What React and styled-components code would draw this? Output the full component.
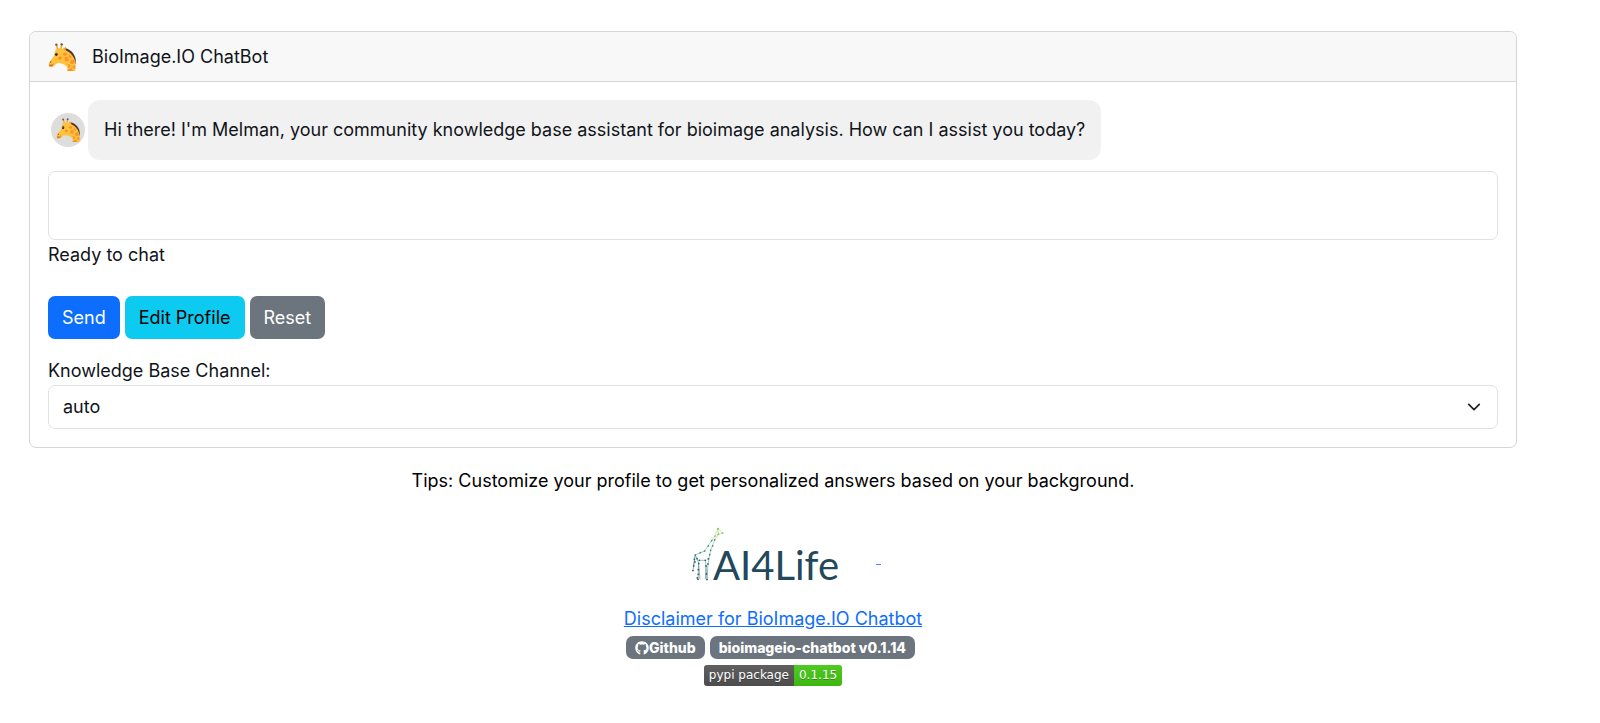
import React from "react";
import styled, { createGlobalStyle } from "styled-components";
import { FaGithub } from "react-icons/fa";

const GlobalStyle = createGlobalStyle`
  *, *::before, *::after { box-sizing: border-box; }
  body {
    margin: 0;
    background: #fff;
    color: #212529;
    font-family: Inter, "Liberation Sans", sans-serif;
    font-size: 18px;
    line-height: 28px;
  }
  button, textarea, select {
    font: inherit;
    color: inherit;
  }
`;

const Page = styled.main`
  padding: 31px 83px 24px 29px;
`;

const Card = styled.section`
  border: 1px solid #d4d5d6;
  border-radius: 7px;
  overflow: hidden;
  color: #10141a;
`;

const CardHeader = styled.header`
  display: flex;
  align-items: center;
  gap: 16px;
  height: 50px;
  padding: 0 18px;
  background: #f8f8f8;
  border-bottom: 1px solid #d4d5d6;
`;

const Title = styled.h1`
  margin: 0;
  font-size: 18px;
  font-weight: 400;
  line-height: 28px;
`;

const CardBody = styled.div`
  display: flex;
  flex-direction: column;
  padding: 18px;
`;

const Message = styled.div`
  display: flex;
  align-items: center;
  gap: 3px;
  padding-left: 3px;
`;

const Avatar = styled.div`
  display: flex;
  flex: none;
  align-items: center;
  justify-content: center;
  width: 34px;
  height: 34px;
  border-radius: 50%;
  background: #ddd;
`;

const Bubble = styled.p`
  margin: 0;
  padding: 16px;
  border-radius: 12px;
  background: #f1f1f1;
`;

const Input = styled.textarea`
  display: block;
  width: 100%;
  height: 69px;
  margin-top: 11px;
  padding: 7px 14px;
  border: 1px solid #dee2e6;
  border-radius: 7px;
  background: #fff;
  resize: none;
`;

const Status = styled.div`
  line-height: 30px;
`;

const Actions = styled.div`
  display: flex;
  gap: 5px;
  margin: 26px 0 18px;
`;

const tones = {
  primary: ["#0d6efd", "#fff"],
  info: ["#0dcaf0", "#000"],
  secondary: ["#6c757d", "#fff"],
};

const Button = styled.button`
  height: 43px;
  padding: 0 14px;
  border: 0;
  border-radius: 7px;
  background: ${({ $tone }) => tones[$tone][0]};
  color: ${({ $tone }) => tones[$tone][1]};
`;

const SelectWrap = styled.div`
  display: grid;
  align-items: center;

  > * { grid-area: 1 / 1; }
  svg {
    justify-self: end;
    margin-right: 17px;
    pointer-events: none;
  }
`;

const Select = styled.select`
  appearance: none;
  width: 100%;
  height: 44px;
  padding: 0 14px;
  border: 1px solid #dee2e6;
  border-radius: 7px;
  background: #fff;
`;

const Footer = styled.footer`
  display: flex;
  flex-direction: column;
  align-items: center;
  padding-top: 19px;
  color: #000;
`;

const Tips = styled.p`
  margin: 0 0 32px;
`;

const Logos = styled.div`
  display: flex;
  gap: 32px;
  margin: 0 0 14px 26px;
`;

const EmptyLink = styled.a`
  width: 5px;
  height: 38px;
  border-bottom: 1px solid #4a86fd;
`;

const LogoLink = styled.a`
  display: block;
  svg { display: block; }
`;

const Disclaimer = styled.a`
  color: #0d6efd;
`;

const Badges = styled.div`
  display: flex;
  gap: 5px;
  margin: 3px 5px 6px 0;
`;

const Badge = styled.a`
  display: flex;
  align-items: center;
  height: 23px;
  padding: 0 9px;
  border-radius: 7px;
  background: #6c757d;
  color: #fff;
  font-size: 14px;
  font-weight: 800;
  text-decoration: none;
`;

const Pypi = styled.a`
  display: flex;
  height: 21px;
  border-radius: 3px;
  overflow: hidden;
  color: #fff;
  font: 12px/21px "DejaVu Sans", sans-serif;
  text-decoration: none;
  text-shadow: 0 1px 0 rgba(1, 1, 1, 0.3);
`;

const PypiPart = styled.span`
  padding: 0 5px;
  background: linear-gradient(rgba(187, 187, 187, 0.1), rgba(0, 0, 0, 0.1))
    ${({ $color }) => $color};
`;

function Giraffe({ size }) {
  return (
    <svg width={size} height={size} viewBox="0 0 82 84" aria-hidden="true">
      <path d="M46 14C64 16 80 31 82 49V65L73 43L53 24Z" fill="#543930" />
      <path d="M25 6L28 20M40 6L37 20" stroke="#f0ad3a" strokeWidth="5" />
      <circle cx="24" cy="5" r="3.5" fill="#7b5544" />
      <circle cx="40" cy="4" r="3.5" fill="#7b5544" />
      <path d="M43 18L53 11Q55 20 45 25Z" fill="#f4a42a" />
      <path d="M22 20C29 14 42 15 49 21C68 27 78 43 81 58V84H56C59 78 58 73 53 68C45 63 38 60 30 60C22 61 17 71 8 72C0 72 0 63 4 56L17 39C19 31 19 24 22 20Z" fill="#ffc23c" />
      <path d="M3 61C0 69 2 72 8 72C13 71 17 68 20 65C14 67 8 66 3 61Z" fill="#f2a02c" />
      <g fill="#f7952a">
        <path d="M49 28L57 31L54 38L48 38L43 33Z" />
        <path d="M35 40L41 43L39 49L32 50L28 45Z" />
        <path d="M49 43L57 41L62 49L57 56L49 53Z" />
        <path d="M61 33L69 40L69 46L62 42Z" />
        <path d="M68 51L77 50L79 60L71 64L65 59Z" />
        <path d="M58 62L65 66L66 73L60 74Z" />
        <path d="M72 69L81 66V78L74 76Z" />
        <path d="M59 79L69 76L76 84H57Z" />
      </g>
      <ellipse cx="24" cy="34" rx="4" ry="5" fill="#302622" />
      <circle cx="23" cy="32" r="1.3" fill="#fff" />
      <ellipse cx="7" cy="57" rx="2" ry="2.5" fill="#66483e" />
      <path d="M4 67Q10 69 15 63" fill="none" stroke="#895020" strokeWidth="2" />
    </svg>
  );
}

const joints = [
  [78, 2], [92, 15], [79, 19], [69, 24], [59, 38], [49, 54], [38, 69], [25, 74],
  [10, 81], [7, 94], [5, 114], [3, 128], [15, 92], [20, 106], [19, 125], [19, 139],
  [18, 154], [22, 97], [40, 97], [42, 114], [43, 138], [45, 155], [48, 108],
  [49, 93], [53, 80], [56, 67], [62, 54], [68, 36], [9, 102], [16, 150],
];

function AI4LifeLogo() {
  return (
    <svg width="152" height="64" viewBox="0 0 152 64" role="img" aria-label="AI4Life">
      <defs>
        <linearGradient id="hide" x1="0" y1="1" x2="0.7" y2="0">
          <stop offset="0" stopColor="#24495c" />
          <stop offset="0.55" stopColor="#2d8a76" />
          <stop offset="1" stopColor="#8cc63f" />
        </linearGradient>
      </defs>
      <g transform="translate(0 1) scale(0.333)">
        <path
          d="M78 2L69 24L59 38L38 69L10 81L3 128M10 81L15 92L20 106L18 154M9 82L5 114M22 97H40L42 114L45 155L48 108L56 67L68 36L79 19L92 15L78 2L79 19M20 106L24 154M42 114L40 154"
          fill="none"
          stroke="url(#hide)"
          strokeWidth="2"
          strokeOpacity="0.7"
        />
        {joints.map(([x, y]) => (
          <circle key={`${x}-${y}`} cx={x} cy={y} r="2.6" fill={y < 30 ? "#79ba55" : y < 90 ? "#3b9670" : "#286174"} />
        ))}
      </g>
      <text x="21" y="53" fill="#23475b" fontFamily="Lato, sans-serif" fontSize="40">
        AI4Life
      </text>
    </svg>
  );
}

export default function App() {
  return (
    <>
      <GlobalStyle />
      <Page>
        <Card>
          <CardHeader>
            <Giraffe size={28} />
            <Title>BioImage.IO ChatBot</Title>
          </CardHeader>
          <CardBody>
            <Message>
              <Avatar>
                <Giraffe size={24} />
              </Avatar>
              <Bubble>
                Hi there! I'm Melman, your community knowledge base assistant for bioimage analysis. How can I assist you today?
              </Bubble>
            </Message>
            <Input aria-label="Message" />
            <Status role="status">Ready to chat</Status>
            <Actions>
              <Button type="button" $tone="primary">Send</Button>
              <Button type="button" $tone="info">Edit Profile</Button>
              <Button type="button" $tone="secondary">Reset</Button>
            </Actions>
            <label htmlFor="channel">Knowledge Base Channel:</label>
            <SelectWrap>
              <Select id="channel" defaultValue="auto">
                <option value="auto">auto</option>
              </Select>
              <svg width="14" height="14" viewBox="0 0 16 16" aria-hidden="true">
                <path d="M2 5l6 6 6-6" fill="none" stroke="#212529" strokeWidth="2" strokeLinecap="round" strokeLinejoin="round" />
              </svg>
            </SelectWrap>
          </CardBody>
        </Card>
        <Footer>
          <Tips>Tips: Customize your profile to get personalized answers based on your background.</Tips>
          <Logos>
            <LogoLink href="#ai4life">
              <AI4LifeLogo />
            </LogoLink>
            <EmptyLink href="#partner" aria-label="Partner" />
          </Logos>
          <Disclaimer href="#disclaimer">Disclaimer for BioImage.IO Chatbot</Disclaimer>
          <Badges>
            <Badge href="#github">
              <FaGithub size={14} aria-hidden="true" />
              Github
            </Badge>
            <Badge href="#version">bioimageio-chatbot v0.1.14</Badge>
          </Badges>
          <Pypi href="#pypi">
            <PypiPart $color="#555">pypi package</PypiPart>
            <PypiPart $color="#4c1">0.1.15</PypiPart>
          </Pypi>
        </Footer>
      </Page>
    </>
  );
}
